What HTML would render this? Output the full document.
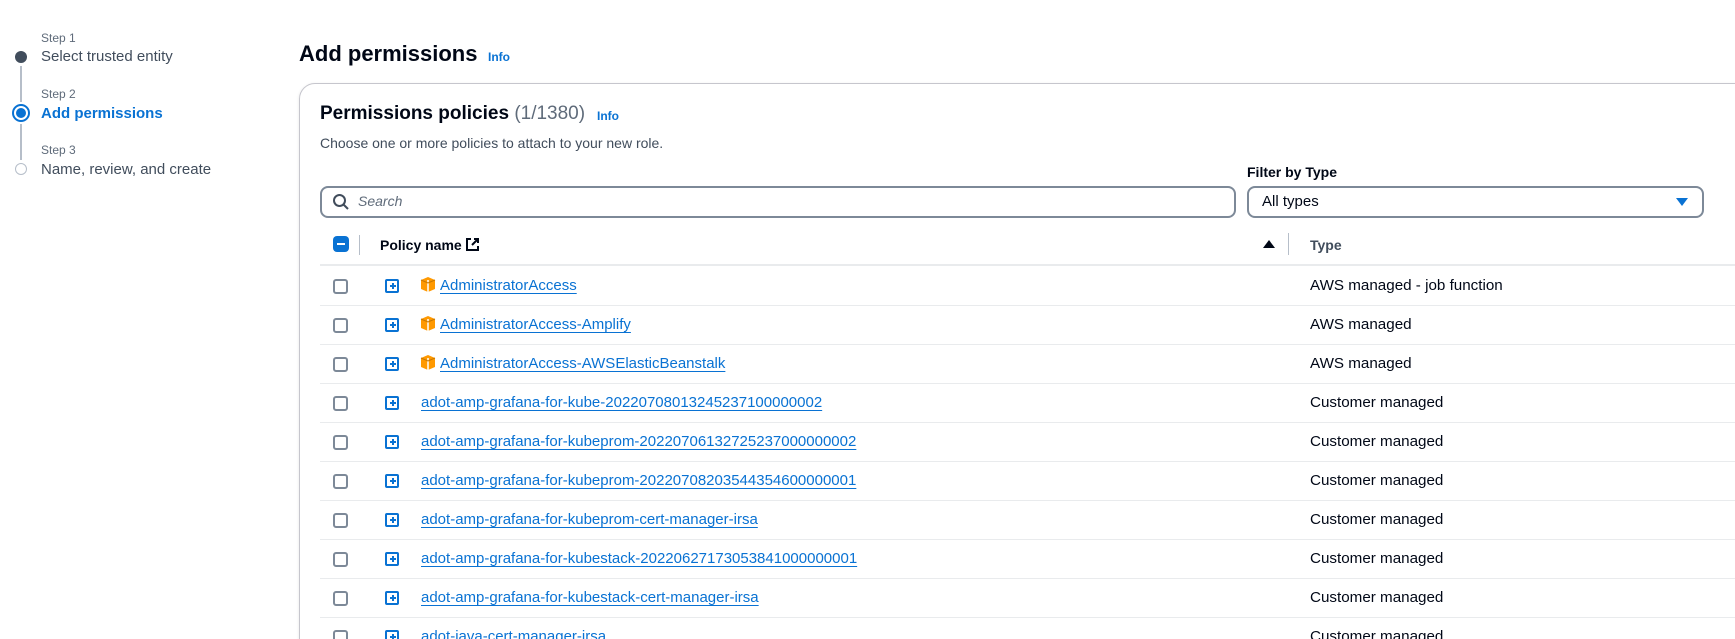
<!DOCTYPE html>
<html style="overflow:hidden;height:639px"><head><meta charset="utf-8"><style>
*{box-sizing:border-box;margin:0;padding:0}
body{width:1735px;height:639px;overflow:hidden;background:#fff;font-family:"Liberation Sans",sans-serif;color:#000716}
#w{position:relative;width:1735px;height:639px;overflow:hidden}
.a{position:absolute;white-space:nowrap}
.step{font-size:12px;color:#5f6b7a}
.sl{font-size:15px;color:#414d5c}
.link{color:#0972d3;text-decoration:underline;text-underline-offset:3px;font-size:15px}
.cb{position:absolute;left:333px;width:15px;height:15px;border:2px solid #7d8998;border-radius:3px}
.ex{position:absolute;left:385px;width:14px;height:14px;border:2px solid #0972d3;border-radius:2px}
.ex:before{content:"";position:absolute;left:3px;top:4px;width:6px;height:2px;background:#0972d3}
.ex:after{content:"";position:absolute;left:5px;top:2px;width:2px;height:6px;background:#0972d3}
.sep{position:absolute;left:320px;right:0;height:1px;background:#e9ebed}
.ty{position:absolute;left:1310px;font-size:15.2px;color:#000716}
</style></head><body><div id="w">
<div class="a step" style="left:41px;top:31px">Step 1</div>
<div class="a sl" style="left:41px;top:48px">Select trusted entity</div>
<div class="a" style="left:15px;top:51px;width:12px;height:12px;border-radius:50%;background:#414d5c"></div>
<div class="a" style="left:20px;top:66px;width:2px;height:36px;background:#b6bec9"></div>
<div class="a step" style="left:41px;top:87px">Step 2</div>
<div class="a sl" style="left:41px;top:105px;color:#0972d3;font-weight:bold">Add permissions</div>
<div class="a" style="left:12px;top:104px;width:18px;height:18px;border-radius:50%;border:2px solid #0972d3;background:#fff"></div>
<div class="a" style="left:16px;top:108px;width:10px;height:10px;border-radius:50%;background:#0972d3"></div>
<div class="a" style="left:20px;top:124px;width:2px;height:36px;background:#b6bec9"></div>
<div class="a step" style="left:41px;top:143px">Step 3</div>
<div class="a sl" style="left:41px;top:161px">Name, review, and create</div>
<div class="a" style="left:15px;top:163px;width:12px;height:12px;border-radius:50%;border:1.5px solid #b6bec9"></div>
<div class="a" style="left:299px;top:41px;font-size:22px;font-weight:bold">Add permissions</div>
<div class="a" style="left:488px;top:50px;font-size:12px;font-weight:bold;color:#0972d3">Info</div>
<div class="a" style="left:299px;top:83px;width:1460px;height:600px;border:1px solid #c6c6cd;border-radius:16px;box-shadow:0 1px 3px rgba(0,7,22,.1)"></div>
<div class="a" style="left:320px;top:103px;font-size:19px;font-weight:bold">Permissions policies <span style="font-weight:normal;color:#5f6b7a">(1/1380)</span></div>
<div class="a" style="left:597px;top:109px;font-size:12px;font-weight:bold;color:#0972d3">Info</div>
<div class="a" style="left:320px;top:135px;font-size:14px;color:#414d5c">Choose one or more policies to attach to your new role.</div>
<div class="a" style="left:320px;top:186px;width:916px;height:32px;border:2px solid #7d8998;border-radius:8px"></div>
<svg class="a" style="left:332px;top:193px" width="18" height="18" viewBox="0 0 18 18"><circle cx="7.5" cy="7.5" r="5.5" fill="none" stroke="#414d5c" stroke-width="2"/><path d="M11.5 11.5L16 16" stroke="#414d5c" stroke-width="2"/></svg>
<div class="a" style="left:358px;top:193px;font-size:14px;font-style:italic;color:#5f6b7a">Search</div>
<div class="a" style="left:1247px;top:164px;font-size:14px;font-weight:bold">Filter by Type</div>
<div class="a" style="left:1247px;top:186px;width:457px;height:32px;border:2px solid #7d8998;border-radius:8px"></div>
<div class="a" style="left:1262px;top:193px;font-size:15px">All types</div>
<svg class="a" style="left:1676px;top:197px" width="12" height="10" viewBox="0 0 12 10"><path d="M0 1H12L6 9Z" fill="#0972d3"/></svg>
<div class="a" style="left:333px;top:236px;width:16px;height:16px;border-radius:4px;background:#0972d3"></div>
<div class="a" style="left:337px;top:243px;width:8px;height:2px;background:#fff"></div>
<div class="a" style="left:359px;top:235px;width:1px;height:20px;background:#b6bec9"></div>
<div class="a" style="left:380px;top:237px;font-size:14px;font-weight:bold">Policy name</div>
<svg class="a" style="left:465px;top:237px" width="15" height="15" viewBox="0 0 15 15"><path d="M6 2H2V13H13V9M9 2H13V6M13 2L7 8" fill="none" stroke="#000716" stroke-width="2"/></svg>
<svg class="a" style="left:1263px;top:239px" width="12" height="10" viewBox="0 0 12 10"><path d="M0 9H12L6 1Z" fill="#000716"/></svg>
<div class="a" style="left:1288px;top:233px;width:1px;height:22px;background:#b6bec9"></div>
<div class="a" style="left:1310px;top:237px;font-size:14px;font-weight:bold;color:#414d5c">Type</div>
<div class="a" style="left:320px;right:0;top:264px;height:2px;background:#e9ebed"></div>

<div class="cb" style="top:279px"></div><div class="ex" style="top:279px"></div>
<svg class="a" style="left:420px;top:276px" width="16" height="17" viewBox="0 0 16 17"><path d="M1 4L8 1L15 4V13L8 16L1 13Z" fill="#f90"/><path d="M8 4V16" stroke="#fff" stroke-width="1.5"/><path d="M1 4L8 7L15 4" fill="none" stroke="#c77700" stroke-width="1"/></svg>
<div class="a link" style="left:440px;top:277px">AdministratorAccess</div>
<div class="ty" style="top:277px">AWS managed - job function</div>
<div class="sep" style="top:305px"></div>

<div class="cb" style="top:318px"></div><div class="ex" style="top:318px"></div>
<svg class="a" style="left:420px;top:315px" width="16" height="17" viewBox="0 0 16 17"><path d="M1 4L8 1L15 4V13L8 16L1 13Z" fill="#f90"/><path d="M8 4V16" stroke="#fff" stroke-width="1.5"/><path d="M1 4L8 7L15 4" fill="none" stroke="#c77700" stroke-width="1"/></svg>
<div class="a link" style="left:440px;top:316px">AdministratorAccess-Amplify</div>
<div class="ty" style="top:316px">AWS managed</div>
<div class="sep" style="top:344px"></div>

<div class="cb" style="top:357px"></div><div class="ex" style="top:357px"></div>
<svg class="a" style="left:420px;top:354px" width="16" height="17" viewBox="0 0 16 17"><path d="M1 4L8 1L15 4V13L8 16L1 13Z" fill="#f90"/><path d="M8 4V16" stroke="#fff" stroke-width="1.5"/><path d="M1 4L8 7L15 4" fill="none" stroke="#c77700" stroke-width="1"/></svg>
<div class="a link" style="left:440px;top:355px">AdministratorAccess-AWSElasticBeanstalk</div>
<div class="ty" style="top:355px">AWS managed</div>
<div class="sep" style="top:383px"></div>

<div class="cb" style="top:396px"></div><div class="ex" style="top:396px"></div>
<div class="a link" style="left:421px;top:394px">adot-amp-grafana-for-kube-20220708013245237100000002</div>
<div class="ty" style="top:394px">Customer managed</div>
<div class="sep" style="top:422px"></div>

<div class="cb" style="top:435px"></div><div class="ex" style="top:435px"></div>
<div class="a link" style="left:421px;top:433px">adot-amp-grafana-for-kubeprom-20220706132725237000000002</div>
<div class="ty" style="top:433px">Customer managed</div>
<div class="sep" style="top:461px"></div>

<div class="cb" style="top:474px"></div><div class="ex" style="top:474px"></div>
<div class="a link" style="left:421px;top:472px">adot-amp-grafana-for-kubeprom-20220708203544354600000001</div>
<div class="ty" style="top:472px">Customer managed</div>
<div class="sep" style="top:500px"></div>

<div class="cb" style="top:513px"></div><div class="ex" style="top:513px"></div>
<div class="a link" style="left:421px;top:511px">adot-amp-grafana-for-kubeprom-cert-manager-irsa</div>
<div class="ty" style="top:511px">Customer managed</div>
<div class="sep" style="top:539px"></div>

<div class="cb" style="top:552px"></div><div class="ex" style="top:552px"></div>
<div class="a link" style="left:421px;top:550px">adot-amp-grafana-for-kubestack-20220627173053841000000001</div>
<div class="ty" style="top:550px">Customer managed</div>
<div class="sep" style="top:578px"></div>

<div class="cb" style="top:591px"></div><div class="ex" style="top:591px"></div>
<div class="a link" style="left:421px;top:589px">adot-amp-grafana-for-kubestack-cert-manager-irsa</div>
<div class="ty" style="top:589px">Customer managed</div>
<div class="sep" style="top:617px"></div>

<div class="cb" style="top:630px"></div><div class="ex" style="top:630px"></div>
<div class="a link" style="left:421px;top:628px">adot-java-cert-manager-irsa</div>
<div class="ty" style="top:628px">Customer managed</div>
</div></body></html>
